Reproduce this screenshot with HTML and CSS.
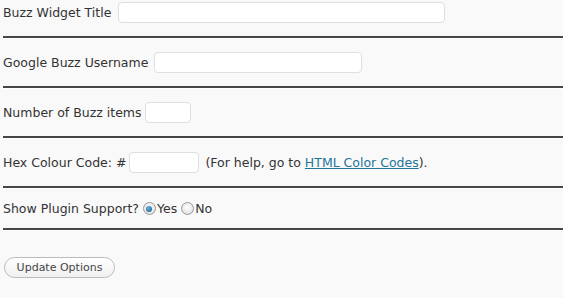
FILE: index.html
```html
<!DOCTYPE html>
<html>
<head>
<meta charset="utf-8">
<link rel="stylesheet" href="styles.css">
</head>
<body>
<form class="options">
  <div class="row">Buzz Widget Title <input class="field w-title" type="text"></div>
  <hr class="sep">
  <div class="row">Google Buzz Username <input class="field w-user" type="text"></div>
  <hr class="sep">
  <div class="row">Number of Buzz items <input class="field w-num" type="text"></div>
  <hr class="sep">
  <div class="row">Hex Colour Code: #<input class="field w-hex" type="text"> (For help, go to <a href="#" class="link">HTML Color Codes</a>).</div>
  <hr class="sep">
  <div class="row short">Show Plugin Support? <span class="radio on"></span>Yes <span class="radio"></span>No</div>
  <hr class="sep">
  <div class="actions"><button type="button" class="btn">Update Options</button></div>
</form>
</body>
</html>
```
FILE: styles.css
```css
html, body { margin: 0; padding: 0; background: #f9f9f9; }
body {
  font-family: "DejaVu Sans", Verdana, sans-serif;
  font-size: 12.5px;
  color: #333;
}
.options { padding: 2px 0 0 3px; display: flex; flex-direction: column; }
.row {
  height: 21px;
  display: flex;
  align-items: center;
  white-space: pre;
}
.row.short { height: 13px; }
.field {
  box-sizing: border-box;
  height: 21px;
  margin: 0 0 0 1px;
  border: 1px solid #dfdfdf;
  border-radius: 4px;
  background: #fff;
  padding: 0 4px;
  font: inherit;
}
.w-title { width: 327px; margin-left: 3px; }
.w-user { width: 208px; margin-left: 2px; }
.w-num { width: 46px; margin-left: -1px; }
.w-hex { width: 70px; margin-left: 3px; margin-right: 2px; }
.link { color: #21759b; text-decoration: underline; }
.sep {
  margin: 13px 0 13px 0;
  height: 0;
  border: 0;
  border-top: 2px solid #464646;
  border-bottom: 1px solid #fff;
}
.radio {
  box-sizing: border-box;
  width: 13px;
  height: 13px;
  border-radius: 50%;
  border: 1px solid #9a9a9a;
  background: radial-gradient(circle at 50% 40%, #fff, #d8d8d8);
  margin: 0 1px 0 0;
  position: relative;
}
.radio.on::after {
  content: "";
  position: absolute;
  left: 2.5px; top: 2.5px;
  width: 6px; height: 6px;
  border-radius: 50%;
  background: radial-gradient(circle at 40% 35%, #6ab7e8, #0d4f7e);
}
.actions { padding: 13px 0 0 1px; }
.btn {
  box-sizing: border-box;
  height: 21px;
  width: 111px;
  border: 1px solid #bbb;
  border-radius: 11px;
  background: linear-gradient(#ffffff, #f0f0f0);
  color: #464646;
  font-family: "DejaVu Sans", Verdana, sans-serif;
  font-size: 11px;
  padding: 0;
}
```
